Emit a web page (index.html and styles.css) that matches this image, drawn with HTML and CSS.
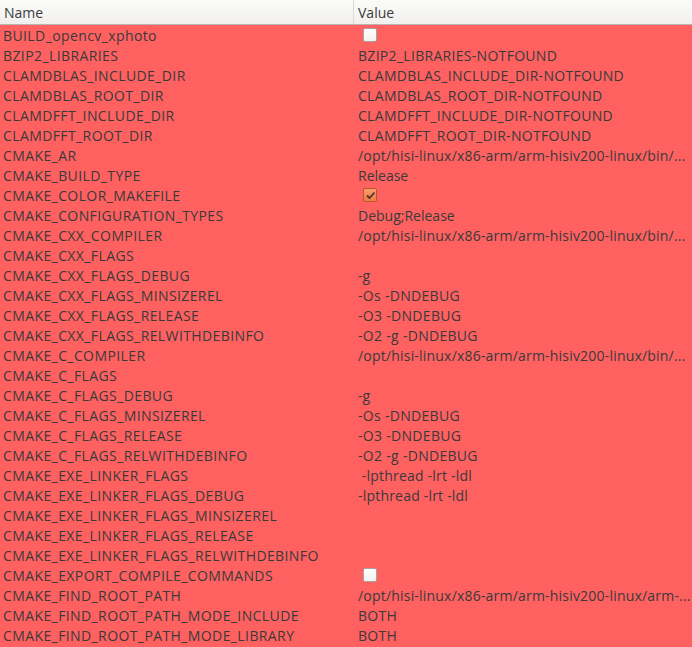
FILE: index.html
```html
<!DOCTYPE html>
<html>
<head>
<meta charset="utf-8">
<link rel="stylesheet" href="styles.css">
</head>
<body>
<div class="table">
  <div class="header">
    <div class="hcell name">Name</div>
    <div class="hcell value">Value</div>
  </div>
  <div class="rows">
    <div class="row"><div class="cell name">BUILD_opencv_xphoto</div><div class="cell value"><span class="cb"></span></div></div>
    <div class="row"><div class="cell name">BZIP2_LIBRARIES</div><div class="cell value up">BZIP2_LIBRARIES-NOTFOUND</div></div>
    <div class="row"><div class="cell name">CLAMDBLAS_INCLUDE_DIR</div><div class="cell value up">CLAMDBLAS_INCLUDE_DIR-NOTFOUND</div></div>
    <div class="row"><div class="cell name">CLAMDBLAS_ROOT_DIR</div><div class="cell value up">CLAMDBLAS_ROOT_DIR-NOTFOUND</div></div>
    <div class="row"><div class="cell name">CLAMDFFT_INCLUDE_DIR</div><div class="cell value up">CLAMDFFT_INCLUDE_DIR-NOTFOUND</div></div>
    <div class="row"><div class="cell name">CLAMDFFT_ROOT_DIR</div><div class="cell value up">CLAMDFFT_ROOT_DIR-NOTFOUND</div></div>
    <div class="row"><div class="cell name">CMAKE_AR</div><div class="cell value path">/opt/hisi-linux/x86-arm/arm-hisiv200-linux/bin/...</div></div>
    <div class="row"><div class="cell name">CMAKE_BUILD_TYPE</div><div class="cell value">Release</div></div>
    <div class="row"><div class="cell name">CMAKE_COLOR_MAKEFILE</div><div class="cell value"><span class="cb checked"><svg viewBox="0 0 13 13" width="13" height="13"><path d="M3 6.5 L5.5 9 L10.5 3.5" fill="none" stroke="#4a3328" stroke-width="1.8"/></svg></span></div></div>
    <div class="row"><div class="cell name">CMAKE_CONFIGURATION_TYPES</div><div class="cell value">Debug;Release</div></div>
    <div class="row"><div class="cell name">CMAKE_CXX_COMPILER</div><div class="cell value path">/opt/hisi-linux/x86-arm/arm-hisiv200-linux/bin/...</div></div>
    <div class="row"><div class="cell name">CMAKE_CXX_FLAGS</div><div class="cell value"></div></div>
    <div class="row"><div class="cell name">CMAKE_CXX_FLAGS_DEBUG</div><div class="cell value">-g</div></div>
    <div class="row"><div class="cell name">CMAKE_CXX_FLAGS_MINSIZEREL</div><div class="cell value up">-Os -DNDEBUG</div></div>
    <div class="row"><div class="cell name">CMAKE_CXX_FLAGS_RELEASE</div><div class="cell value up">-O3 -DNDEBUG</div></div>
    <div class="row"><div class="cell name">CMAKE_CXX_FLAGS_RELWITHDEBINFO</div><div class="cell value up">-O2 -g -DNDEBUG</div></div>
    <div class="row"><div class="cell name">CMAKE_C_COMPILER</div><div class="cell value path">/opt/hisi-linux/x86-arm/arm-hisiv200-linux/bin/...</div></div>
    <div class="row"><div class="cell name">CMAKE_C_FLAGS</div><div class="cell value"></div></div>
    <div class="row"><div class="cell name">CMAKE_C_FLAGS_DEBUG</div><div class="cell value">-g</div></div>
    <div class="row"><div class="cell name">CMAKE_C_FLAGS_MINSIZEREL</div><div class="cell value up">-Os -DNDEBUG</div></div>
    <div class="row"><div class="cell name">CMAKE_C_FLAGS_RELEASE</div><div class="cell value up">-O3 -DNDEBUG</div></div>
    <div class="row"><div class="cell name">CMAKE_C_FLAGS_RELWITHDEBINFO</div><div class="cell value up">-O2 -g -DNDEBUG</div></div>
    <div class="row"><div class="cell name">CMAKE_EXE_LINKER_FLAGS</div><div class="cell value path">&nbsp;-lpthread -lrt -ldl</div></div>
    <div class="row"><div class="cell name">CMAKE_EXE_LINKER_FLAGS_DEBUG</div><div class="cell value path">-lpthread -lrt -ldl</div></div>
    <div class="row"><div class="cell name">CMAKE_EXE_LINKER_FLAGS_MINSIZEREL</div><div class="cell value"></div></div>
    <div class="row"><div class="cell name">CMAKE_EXE_LINKER_FLAGS_RELEASE</div><div class="cell value"></div></div>
    <div class="row"><div class="cell name">CMAKE_EXE_LINKER_FLAGS_RELWITHDEBINFO</div><div class="cell value"></div></div>
    <div class="row"><div class="cell name">CMAKE_EXPORT_COMPILE_COMMANDS</div><div class="cell value"><span class="cb"></span></div></div>
    <div class="row"><div class="cell name">CMAKE_FIND_ROOT_PATH</div><div class="cell value path">/opt/hisi-linux/x86-arm/arm-hisiv200-linux/arm-...</div></div>
    <div class="row"><div class="cell name">CMAKE_FIND_ROOT_PATH_MODE_INCLUDE</div><div class="cell value up">BOTH</div></div>
    <div class="row"><div class="cell name">CMAKE_FIND_ROOT_PATH_MODE_LIBRARY</div><div class="cell value up">BOTH</div></div>
  </div>
</div>
</body>
</html>
```

FILE: styles.css
```css
html, body {
  margin: 0;
  padding: 0;
  background: #ff6161;
}
body {
  width: 692px;
  height: 647px;
  overflow: hidden;
  font-family: "Open Sans", "Noto Sans", sans-serif;
  font-size: 14px;
  color: #3a3a3a;
}
.header {
  display: flex;
  height: 24px;
  border-bottom: 1px solid #b8b6b2;
  background: linear-gradient(#fbfbfa, #f1f0ee);
}
.hcell {
  display: flex;
  align-items: center;
  padding-left: 4px;
  font-size: 14px;
  color: #3c3c3c;
}
.hcell.name {
  width: 349px;
  border-right: 1px solid #dcdad6;
}
.hcell.value {
  flex: 1;
}
.rows {
  background: #ff6161;
}
.row {
  display: flex;
  height: 20px;
  align-items: center;
}
.cell {
  white-space: nowrap;
  overflow: hidden;
}
.cell.name {
  width: 351px;
  padding-left: 3px;
  letter-spacing: 0.4px;
}
.cell.value {
  flex: 1;
  padding-left: 4px;
  display: flex;
  align-items: center;
}
.cell.value.up {
  letter-spacing: 0.3px;
}
.cell.value.path {
  letter-spacing: 0.2px;
}
.cb {
  display: inline-block;
  width: 12px;
  height: 12px;
  margin-left: 5px;
  border: 1px solid #a8a39d;
  border-radius: 2px;
  background: linear-gradient(#ffffff, #f2f1ef);
  box-sizing: content-box;
  position: relative;
}
.cb.checked {
  border-color: #b8562f;
  background: linear-gradient(#f99c6e, #ef7a44);
}
.cb svg {
  position: absolute;
  left: -0.5px;
  top: -0.5px;
}
```
